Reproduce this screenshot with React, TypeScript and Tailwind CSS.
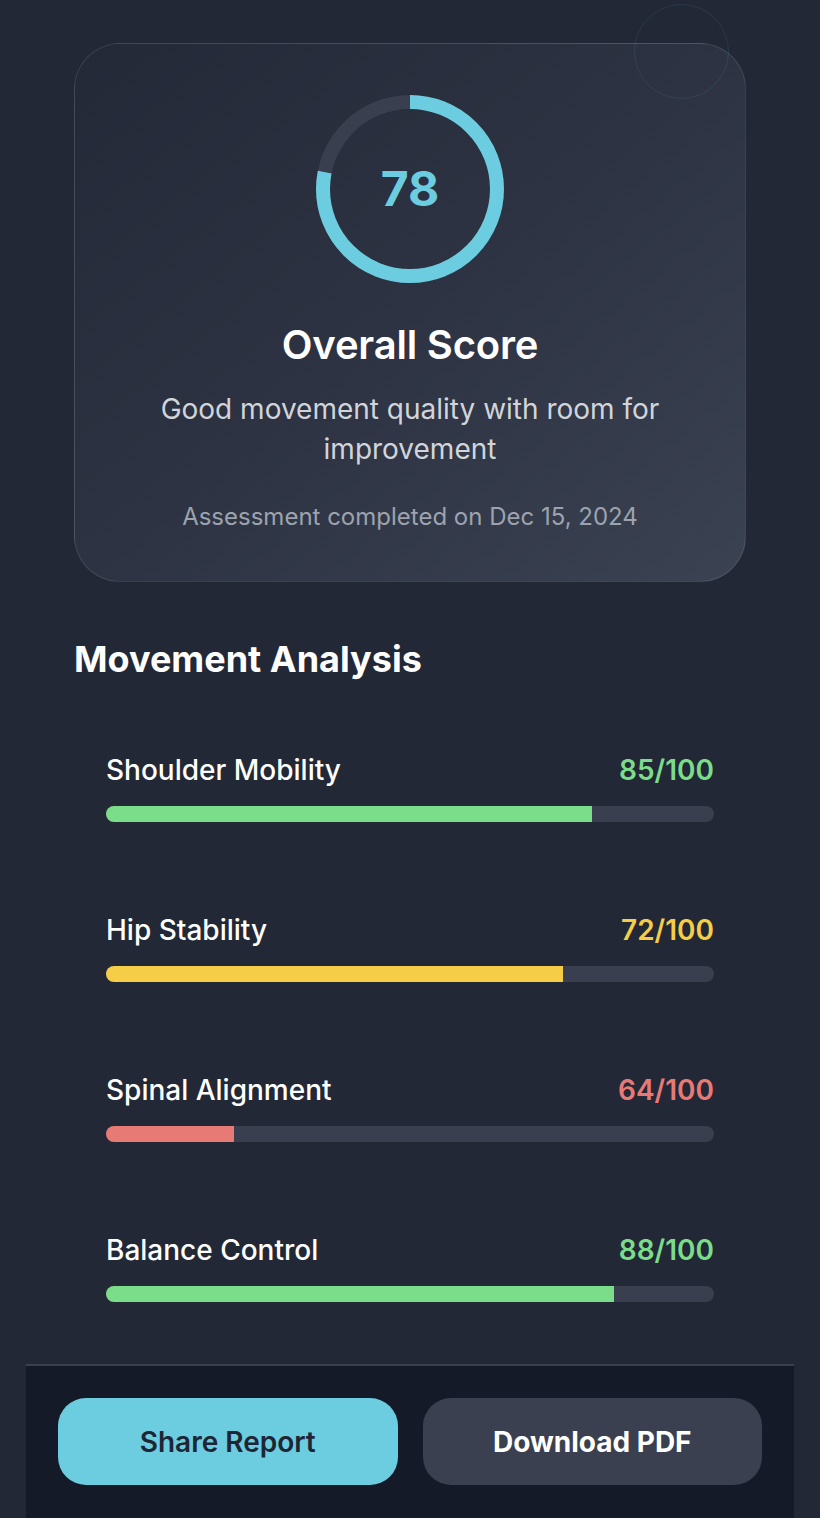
import React from 'react';

const metrics = [
  { name: 'Shoulder Mobility', score: 85, fill: 80, text: 'text-[#7bdc8a]', bar: 'bg-[#7bdc8a]' },
  { name: 'Hip Stability', score: 72, fill: 75.2, text: 'text-[#f5cd47]', bar: 'bg-[#f5cd47]' },
  { name: 'Spinal Alignment', score: 64, fill: 21, text: 'text-[#e87a76]', bar: 'bg-[#e87a76]' },
  { name: 'Balance Control', score: 88, fill: 83.5, text: 'text-[#7bdc8a]', bar: 'bg-[#7bdc8a]' },
];

function ScoreRing({ value }: { value: number }) {
  const r = 87;
  const c = 2 * Math.PI * r;
  return (
    <div className="relative w-[192px] h-[192px]">
      <svg width="192" height="192" viewBox="0 0 192 192" className="-rotate-90">
        <circle cx="96" cy="96" r={r} fill="none" stroke="#3a3f4f" strokeWidth="14" />
        <circle
          cx="96"
          cy="96"
          r={r}
          fill="none"
          stroke="#6ccde0"
          strokeWidth="14"
          strokeDasharray={c}
          strokeDashoffset={c * (1 - value / 100)}
        />
      </svg>
      <div className="absolute inset-0 flex items-center justify-center">
        <span className="text-[48px] font-bold text-[#6ccde0] leading-none">{value}</span>
      </div>
    </div>
  );
}

export default function App() {
  return (
    <div className="min-h-[1518px] bg-[#222836] text-white" style={{ fontFamily: 'Inter, "Noto Sans", sans-serif' }}>
      <div className="mx-auto max-w-[768px] flex flex-col min-h-[1518px]">
        <div className="px-12 pt-[43px] flex-1">
          {/* Overall score card */}
          <div className="relative rounded-[46px] border border-white/10 bg-gradient-to-br from-[#232937] via-[#2d3342] to-[#3b4252] px-8 pt-[49px] pb-[50px] flex flex-col items-center text-center">
            <div className="absolute -top-[40px] right-[16px] w-[95px] h-[95px] rounded-full border border-[#6ccde0]/10" />
            <ScoreRing value={78} />
            <h1 className="mt-10 text-[40px] leading-[40px] font-semibold tracking-[-0.2px]">Overall Score</h1>
            <p className="mt-6 text-[28px] leading-[40px] text-[#d1d5db] max-w-[540px]">
              Good movement quality with room for improvement
            </p>
            <p className="mt-[34px] text-[24px] leading-[28px] text-[#9ca3af]">
              Assessment completed on Dec 15, 2024
            </p>
          </div>

          {/* Movement analysis */}
          <h2 className="mt-[56px] text-[36px] leading-[42px] font-bold">Movement Analysis</h2>
          <div className="mt-[72px] px-8 flex flex-col gap-[90px]">
            {metrics.map((m) => (
              <div key={m.name}>
                <div className="flex items-center justify-between">
                  <span className="text-[28px] leading-[36px] font-medium">{m.name}</span>
                  <span className={`text-[28px] leading-[36px] font-semibold ${m.text}`}>{m.score}/100</span>
                </div>
                <div className="mt-[18px] h-[16px] rounded-full bg-[#3a3f4f] overflow-hidden">
                  <div className={`h-full ${m.bar}`} style={{ width: `${m.fill}%` }} />
                </div>
              </div>
            ))}
          </div>
        </div>

        {/* Footer actions */}
        <div className="mt-[62px] border-t-2 border-[#3a4050] bg-[#151a28] px-8 pt-[32px] pb-[33px] flex gap-[25px]">
          <button className="flex-1 h-[87px] rounded-[28px] bg-[#6ccde0] text-[#1e2635] text-[28px] font-semibold">
            Share Report
          </button>
          <button className="flex-1 h-[87px] rounded-[28px] bg-[#3a4050] text-white text-[28px] font-bold">
            Download PDF
          </button>
        </div>
      </div>
    </div>
  );
}
